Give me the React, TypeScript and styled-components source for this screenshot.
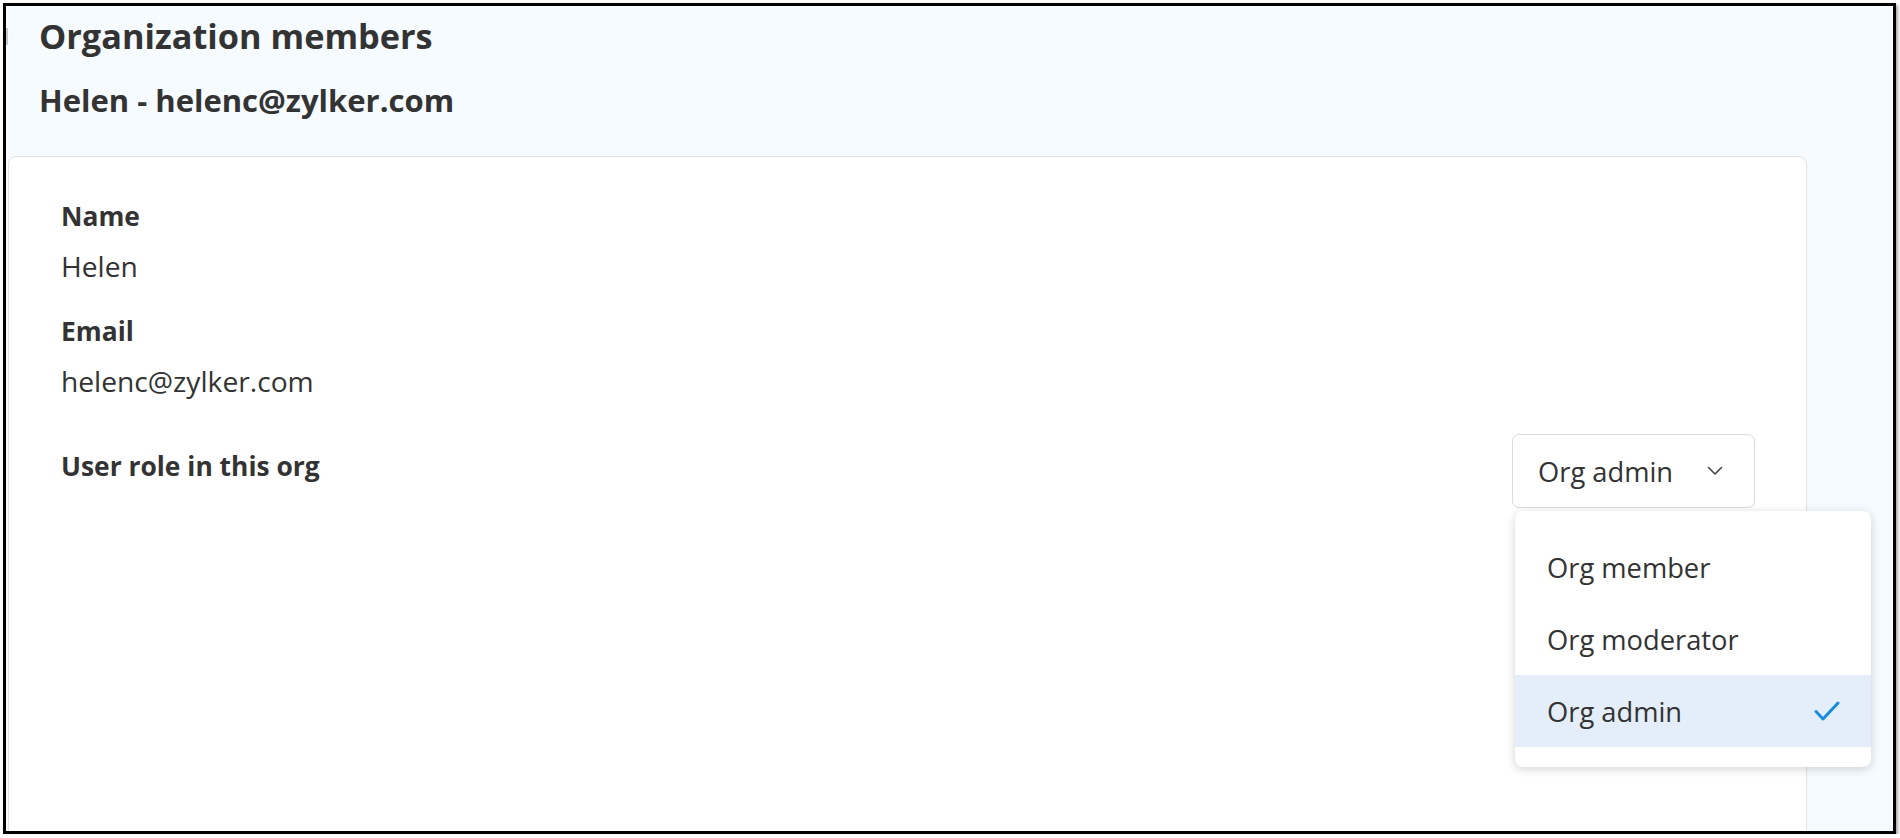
import styled, { createGlobalStyle } from "styled-components";

const GlobalStyle = createGlobalStyle`
  html, body {
    margin: 0;
    padding: 0;
    background: #ffffff;
  }
  * {
    box-sizing: border-box;
  }
`;

const Frame = styled.div`
  position: relative;
  display: flex;
  flex-direction: column;
  margin: 3px 0 0 3px;
  width: 1893px;
  height: 831px;
  border: 3px solid #000;
  background-color: #f5fbff;
  box-shadow: 2px 2px 3px rgba(0, 0, 0, 0.35);
  overflow: hidden;
  font-family: "Open Sans", Lato, sans-serif;
  color: #333;
`;

const Notch = styled.span`
  position: absolute;
  left: 0;
  top: 22px;
  width: 2px;
  height: 17px;
  background-color: #c8c8c8;
`;

const Header = styled.header`
  display: flex;
  flex-direction: column;
  padding: 10px 0 0 33px;
`;

const PageTitle = styled.h1`
  margin: 0;
  font-size: 34.3px;
  line-height: 40px;
  font-weight: 700;
`;

const MemberTitle = styled.h2`
  margin: 26px 0 0;
  font-size: 31px;
  line-height: 36px;
  font-weight: 700;
`;

const Card = styled.section`
  display: flex;
  flex-direction: column;
  margin: 38px 0 0 2px;
  width: 1799px;
  flex: 1 0 auto;
  min-height: 760px;
  padding: 43px 51px 0 52px;
  background-color: #fff;
  border: 1px solid #e2e2e2;
  border-radius: 8px;
`;

const Field = styled.div<{ $gap?: number }>`
  display: flex;
  flex-direction: column;
  gap: 18px;
  margin-top: ${(p) => p.$gap ?? 0}px;
`;

const Label = styled.span`
  font-size: 26.4px;
  line-height: 32px;
  font-weight: 700;
`;

const Value = styled.span`
  font-size: 28.2px;
  line-height: 32px;
  font-weight: 400;
`;

const RoleRow = styled.div`
  display: flex;
  align-items: flex-start;
  justify-content: space-between;
  margin-top: 37px;
`;

const RoleLabel = styled(Label)`
  margin-top: 16px;
`;

const SelectWrap = styled.div`
  position: relative;
`;

const SelectButton = styled.button`
  display: flex;
  align-items: center;
  justify-content: space-between;
  width: 243px;
  height: 74px;
  padding: 0 31px 0 25px;
  background-color: #fff;
  border: 1px solid #dcdcdc;
  border-radius: 7px;
  font-family: inherit;
  font-size: 27.3px;
  color: #333;
  cursor: pointer;
`;

const Menu = styled.ul`
  position: absolute;
  top: calc(100% + 3px);
  left: 3px;
  width: 356px;
  margin: 0;
  padding: 20px 0;
  list-style: none;
  background-color: #fff;
  border-radius: 8px;
  box-shadow: 0 2px 10px rgba(0, 0, 0, 0.18);
  z-index: 2;
`;

const MenuItem = styled.li<{ $active?: boolean }>`
  display: flex;
  align-items: center;
  justify-content: space-between;
  height: 72px;
  padding: 0 31px 0 32px;
  font-size: 27.3px;
  color: #333;
  background-color: ${(p) => (p.$active ? "#e3eefa" : "transparent")};
`;

const Chevron = () => (
  <svg width="16" height="10" viewBox="0 0 16 10" fill="none">
    <polyline points="1.5,1.5 8,8 14.5,1.5" stroke="#444" strokeWidth="1.6" strokeLinecap="round" strokeLinejoin="round" />
  </svg>
);

const Check = () => (
  <svg width="26" height="21" viewBox="0 0 26 21" fill="none">
    <polyline points="2,10.5 9,18 24,2" stroke="#1a8ce0" strokeWidth="3" strokeLinecap="round" strokeLinejoin="round" />
  </svg>
);

const roles = ["Org member", "Org moderator", "Org admin"];

export default function App() {
  const selected = "Org admin";

  return (
    <>
      <GlobalStyle />
      <Frame>
        <Notch />
        <Header>
          <PageTitle>Organization members</PageTitle>
          <MemberTitle>Helen - helenc@zylker.com</MemberTitle>
        </Header>

        <Card>
          <Field>
            <Label>Name</Label>
            <Value>Helen</Value>
          </Field>
          <Field $gap={33}>
            <Label>Email</Label>
            <Value>helenc@zylker.com</Value>
          </Field>

          <RoleRow>
            <RoleLabel>User role in this org</RoleLabel>
            <SelectWrap>
              <SelectButton>
                {selected}
                <Chevron />
              </SelectButton>
              <Menu>
                {roles.map((role) => (
                  <MenuItem key={role} $active={role === selected}>
                    {role}
                    {role === selected && <Check />}
                  </MenuItem>
                ))}
              </Menu>
            </SelectWrap>
          </RoleRow>
        </Card>
      </Frame>
    </>
  );
}
